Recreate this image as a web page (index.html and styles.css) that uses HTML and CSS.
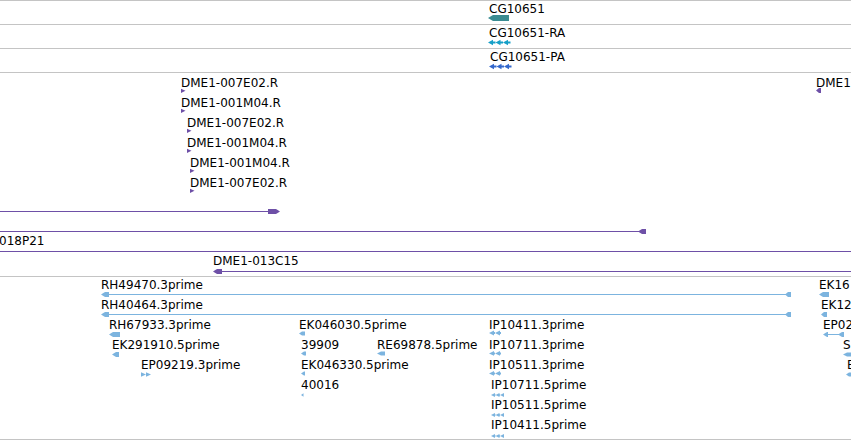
FILE: index.html
```html
<!DOCTYPE html>
<html lang="en">

<head>
  <meta charset="UTF-8">
  <title>CG10651 region</title>
  <link rel="stylesheet" href="styles.css">
</head>

<body>
  <div class="tracks">

    <!-- gene -->
    <div class="track single">
      <div class="row">
        <div class="feat gene" style="left:489px">
          <span class="label">CG10651</span>
          <svg class="glyph" width="22" height="7"><polygon points="-1,3 4,0 20,0 20,6 4,6" /></svg>
        </div>
      </div>
    </div>

    <!-- transcript -->
    <div class="track single">
      <div class="row">
        <div class="feat mrna" style="left:489px">
          <span class="label">CG10651-RA</span>
          <svg class="glyph" width="22" height="7">
            <polygon points="-1,3.5 4,0.8 4,2.5 6.5,2.5 6.5,4.5 4,4.5 4,6.2" />
            <polygon points="6.5,3.5 11.5,0.8 11.5,2.5 14,2.5 14,4.5 11.5,4.5 11.5,6.2" />
            <polygon points="14,3.5 19,0.8 19,2.5 21.5,2.5 21.5,4.5 19,4.5 19,6.2" />
          </svg>
        </div>
      </div>
    </div>

    <!-- protein -->
    <div class="track single">
      <div class="row">
        <div class="feat protein" style="left:490px">
          <span class="label">CG10651-PA</span>
          <svg class="glyph" width="22" height="7">
            <polygon points="-1,3.5 4,0.8 4,2.5 6.5,2.5 6.5,4.5 4,4.5 4,6.2" />
            <polygon points="6.5,3.5 11.5,0.8 11.5,2.5 14,2.5 14,4.5 11.5,4.5 11.5,6.2" />
            <polygon points="14,3.5 19,0.8 19,2.5 21.5,2.5 21.5,4.5 19,4.5 19,6.2" />
          </svg>
        </div>
      </div>
    </div>

    <!-- BAC end reads + clones -->
    <div class="track reads">
      <div class="row read">
        <div class="feat dme" style="left:181px">
          <span class="label">DME1-007E02.R</span>
          <svg class="glyph" width="5" height="5"><polygon points="0,-0.3 4.5,1.8 0,3.9" /></svg>
        </div>
        <div class="feat dme" style="left:816px">
          <span class="label">DME1</span>
          <svg class="glyph" width="5" height="5"><polygon points="0,1.5 3,-1 5,-1 5,4 3,4" /></svg>
        </div>
      </div>
      <div class="row read">
        <div class="feat dme" style="left:181px">
          <span class="label">DME1-001M04.R</span>
          <svg class="glyph" width="5" height="5"><polygon points="0,-0.3 4.5,1.8 0,3.9" /></svg>
        </div>
      </div>
      <div class="row read">
        <div class="feat dme" style="left:187px">
          <span class="label">DME1-007E02.R</span>
          <svg class="glyph" width="5" height="5"><polygon points="0,-0.3 4.5,1.8 0,3.9" /></svg>
        </div>
      </div>
      <div class="row read">
        <div class="feat dme" style="left:187px">
          <span class="label">DME1-001M04.R</span>
          <svg class="glyph" width="5" height="5"><polygon points="0,-0.3 4.5,1.8 0,3.9" /></svg>
        </div>
      </div>
      <div class="row read">
        <div class="feat dme" style="left:190px">
          <span class="label">DME1-001M04.R</span>
          <svg class="glyph" width="5" height="5"><polygon points="0,-0.3 4.5,1.8 0,3.9" /></svg>
        </div>
      </div>
      <div class="row read">
        <div class="feat dme" style="left:190px">
          <span class="label">DME1-007E02.R</span>
          <svg class="glyph" width="5" height="5"><polygon points="0,-0.3 4.5,1.8 0,3.9" /></svg>
        </div>
      </div>

      <div class="row">
        <div class="feat dme" style="left:0">
          <span class="label">&nbsp;</span>
          <svg class="glyph" width="851" height="7">
            <rect x="0" y="4" width="270" height="1" />
            <polygon points="268,2 276,2 280,4.5 276,7 268,7" />
          </svg>
        </div>
      </div>
      <div class="row">
        <div class="feat dme" style="left:0">
          <span class="label">&nbsp;</span>
          <svg class="glyph" width="851" height="7">
            <rect x="0" y="4" width="640" height="1" />
            <polygon points="638,4.5 642,2 646,2 646,7 642,7" />
          </svg>
        </div>
      </div>
      <div class="row">
        <div class="feat dme" style="left:-1px">
          <span class="label">018P21</span>
          <svg class="glyph" width="853" height="7"><rect x="0" y="4" width="853" height="1" /></svg>
        </div>
      </div>
      <div class="row">
        <div class="feat dme" style="left:213px">
          <span class="label">DME1-013C15</span>
          <svg class="glyph" width="640" height="7">
            <polygon points="0,4.5 4,2 9,2 9,7 4,7" />
            <rect x="8" y="4" width="632" height="1" />
          </svg>
        </div>
      </div>
    </div>

    <!-- ESTs -->
    <div class="track ests">
      <div class="row">
        <div class="feat est" style="left:101px">
          <span class="label">RH49470.3prime</span>
          <svg class="glyph" width="691" height="7">
            <polygon points="0,4.5 4,2 8,2 8,7 4,7" />
            <rect x="8" y="4" width="678" height="1" />
            <polygon points="684,4.5 687,2 690,2 690,7 687,7" />
          </svg>
        </div>
        <div class="feat est" style="left:819px">
          <span class="label">EK16</span>
          <svg class="glyph" width="10" height="7"><polygon points="0,4.5 4,2 10,2 10,7 4,7" /></svg>
        </div>
      </div>
      <div class="row">
        <div class="feat est" style="left:101px">
          <span class="label">RH40464.3prime</span>
          <svg class="glyph" width="691" height="7">
            <polygon points="0,4.5 4,2 8,2 8,7 4,7" />
            <rect x="8" y="4" width="678" height="1" />
            <polygon points="684,4.5 687,2 690,2 690,7 687,7" />
          </svg>
        </div>
        <div class="feat est" style="left:821px">
          <span class="label">EK12</span>
          <svg class="glyph" width="6" height="7"><polygon points="0,4.5 3,2 6,2 6,7 3,7" /></svg>
        </div>
      </div>
      <div class="row">
        <div class="feat est" style="left:109px">
          <span class="label">RH67933.3prime</span>
          <svg class="glyph" width="11" height="7"><polygon points="0,4.5 4,2 11,2 11,7 4,7" /></svg>
        </div>
        <div class="feat est" style="left:299px">
          <span class="label">EK046030.5prime</span>
          <svg class="glyph" width="6" height="7"><polygon points="0,3.5 3,1.5 6,1.5 6,5.5 3,5.5" /></svg>
        </div>
        <div class="feat est" style="left:489px">
          <span class="label">IP10411.3prime</span>
          <svg class="glyph" width="12" height="7">
            <polygon points="0,3 5,0.6 5,2 6,2 6,4 5,4 5,5.4" />
            <polygon points="6,3 11,0.6 11,2 12,2 12,4 11,4 11,5.4" />
          </svg>
        </div>
        <div class="feat est" style="left:823px">
          <span class="label">EP02</span>
          <svg class="glyph" width="21" height="7">
            <polygon points="0,4.5 4,2 5,2 5,7 4,7" />
            <rect x="5" y="4" width="11" height="1" />
            <polygon points="15,4.5 19,2 21,2 21,7 19,7" />
          </svg>
        </div>
      </div>
      <div class="row">
        <div class="feat est" style="left:112px">
          <span class="label">EK291910.5prime</span>
          <svg class="glyph" width="7" height="7"><polygon points="0,4.5 4,2 7,2 7,7 4,7" /></svg>
        </div>
        <div class="feat est" style="left:301px">
          <span class="label">39909</span>
          <svg class="glyph" width="5" height="7"><polygon points="0,3.5 3,1.5 5,1.5 5,5.5 3,5.5" /></svg>
        </div>
        <div class="feat est" style="left:377px">
          <span class="label">RE69878.5prime</span>
          <svg class="glyph" width="8" height="7"><polygon points="0,3.5 4,1.5 8,1.5 8,5.5 4,5.5" /></svg>
        </div>
        <div class="feat est" style="left:489px">
          <span class="label">IP10711.3prime</span>
          <svg class="glyph" width="12" height="7">
            <polygon points="0,3.4 5,1 5,2.4 6,2.4 6,4.4 5,4.4 5,5.8" />
            <polygon points="6,3.4 11,1 11,2.4 12,2.4 12,4.4 11,4.4 11,5.8" />
          </svg>
        </div>
        <div class="feat est" style="left:843px">
          <span class="label">SI</span>
          <svg class="glyph" width="8" height="7"><polygon points="0,4.5 4,2.5 8,2.5 8,6.5 4,6.5" /></svg>
        </div>
      </div>
      <div class="row">
        <div class="feat est" style="left:141px">
          <span class="label">EP09219.3prime</span>
          <svg class="glyph" width="10" height="7">
            <polygon points="0,2.2 5,4.5 0,6.8" />
            <polygon points="5,2.2 10,4.5 5,6.8" />
          </svg>
        </div>
        <div class="feat est" style="left:301px">
          <span class="label">EK046330.5prime</span>
          <svg class="glyph" width="4" height="7"><polygon points="0,3.5 3,1.5 4,1.5 4,5.5 3,5.5" /></svg>
        </div>
        <div class="feat est" style="left:489px">
          <span class="label">IP10511.3prime</span>
          <svg class="glyph" width="12" height="7">
            <polygon points="0,3.4 5,1 5,2.4 6,2.4 6,4.4 5,4.4 5,5.8" />
            <polygon points="6,3.4 11,1 11,2.4 12,2.4 12,4.4 11,4.4 11,5.8" />
          </svg>
        </div>
        <div class="feat est" style="left:847px">
          <span class="label">E</span>
          <svg class="glyph" width="5" height="7"><polygon points="-1,4.5 2,2.5 5,2.5 5,6.5 2,6.5" /></svg>
        </div>
      </div>
      <div class="row">
        <div class="feat est" style="left:301px">
          <span class="label">40016</span>
          <svg class="glyph" width="3" height="7"><polygon points="0,5 2.5,3.2 2.5,6.8" /></svg>
        </div>
        <div class="feat est" style="left:491px">
          <span class="label">IP10711.5prime</span>
          <svg class="glyph" width="13" height="7">
            <polygon points="0,5 4,3 4,4.2 4.5,4.2 4.5,5.8 4,5.8 4,7" />
            <polygon points="4.5,5 8.5,3 8.5,4.2 9,4.2 9,5.8 8.5,5.8 8.5,7" />
            <polygon points="9,5 13,3 13,7" />
          </svg>
        </div>
      </div>
      <div class="row">
        <div class="feat est" style="left:491px">
          <span class="label">IP10511.5prime</span>
          <svg class="glyph" width="13" height="7">
            <polygon points="0,5 4,3 4,4.2 4.5,4.2 4.5,5.8 4,5.8 4,7" />
            <polygon points="4.5,5 8.5,3 8.5,4.2 9,4.2 9,5.8 8.5,5.8 8.5,7" />
            <polygon points="9,5 13,3 13,7" />
          </svg>
        </div>
      </div>
      <div class="row">
        <div class="feat est" style="left:491px">
          <span class="label">IP10411.5prime</span>
          <svg class="glyph" width="13" height="7">
            <polygon points="0,6 4,4 4,5.2 4.5,5.2 4.5,6.8 4,6.8 4,8" />
            <polygon points="4.5,6 8.5,4 8.5,5.2 9,5.2 9,6.8 8.5,6.8 8.5,8" />
            <polygon points="9,6 13,4 13,8" />
          </svg>
        </div>
      </div>
    </div>

  </div>
</body>

</html>
```

FILE: styles.css
```css
body {
  margin: 0;
  background-color: #ffffff;
  color: #000000;
  font-family: "DejaVu Sans", sans-serif;
  font-size: 12px;
}

:root {
  --grid-color: #c4c4c4;
  --gene-color: #3a8c92;
  --mrna-color: #16a0c8;
  --protein-color: #3468cc;
  --dme-color: #6e50a7;
  --est-color: #7cb4df;
}

.tracks {
  width: 100%;
}

.track {
  box-sizing: border-box;
  position: relative;
  overflow: hidden;
  border-top: 1px solid var(--grid-color);
}

.track.single {
  height: 24px;
  padding-top: 1px;
}

.track.reads {
  height: 204px;
  padding-top: 1px;
}

.track.ests {
  height: 164px;
  border-bottom: 1px solid var(--grid-color);
}

.row {
  position: relative;
  height: 20px;
}

/* read labels sit 2px lower than the clone rows below them */
.row.read .label {
  padding-top: 2px;
}

.feat {
  position: absolute;
  top: 0;
  display: flex;
  flex-direction: column;
  align-items: flex-start;
}

/* 14px line box puts the baseline on a whole pixel */
.label {
  line-height: 14px;
  white-space: nowrap;
}

.glyph {
  display: block;
  overflow: visible;
  margin-top: -1px;
}

.ests .label {
  padding-top: 1px;
}

.ests .glyph {
  margin-top: -2px;
}

.gene .glyph {
  fill: var(--gene-color);
}

.mrna .glyph {
  fill: var(--mrna-color);
}

.protein .glyph {
  fill: var(--protein-color);
}

.dme .glyph {
  fill: var(--dme-color);
}

.est .glyph {
  fill: var(--est-color);
}
```
